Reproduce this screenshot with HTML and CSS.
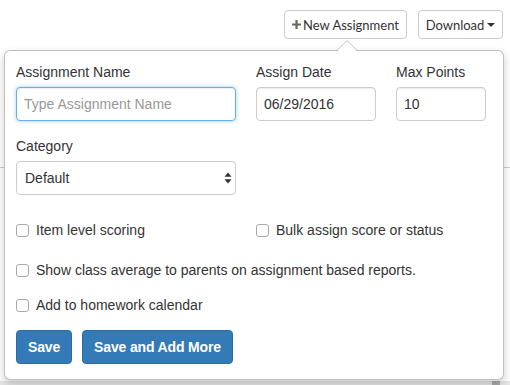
FILE: index.html
```html
<html>
  <head>
    <meta name="viewport" content="width=device-width, initial-scale=1" />
    <link rel="stylesheet" href="styles.css">
  </head>
  <body>
    <div class="page">
      <div class="toolbar">
        <button class="btn btn-default new-btn">
          <svg class="plus" width="9" height="9" viewBox="0 0 9 9"><path d="M3.4 0h2.2v3.4H9v2.2H5.6V9H3.4V5.6H0V3.4h3.4z" fill="#666"/></svg>New Assignment
        </button>
        <button class="btn btn-default">Download<span class="caret"></span></button>
      </div>

      <div class="sheet">
        <div class="sheet-row"></div>
        <div class="sheet-foot"><span class="sheet-scroll"></span></div>
      </div>

      <div class="popover">
        <div class="popover-arrow"></div>
        <form class="assign-form">
          <div class="form-row">
            <div class="form-group">
              <label>Assignment Name</label>
              <input class="form-control is-focused" type="text" placeholder="Type Assignment Name">
            </div>
            <div class="form-group">
              <label>Assign Date</label>
              <input class="form-control" type="text" value="06/29/2016">
            </div>
            <div class="form-group">
              <label>Max Points</label>
              <input class="form-control" type="text" value="10">
            </div>
          </div>

          <div class="form-row category-row">
            <div class="form-group">
              <label>Category</label>
              <div class="select-wrap">
                <select class="form-control">
                  <option>Default</option>
                </select>
                <svg class="select-arrows" width="8" height="12" viewBox="0 0 8 12">
                  <path d="M4 0.5 L7.5 4.8 L0.5 4.8 Z" fill="#333"/>
                  <path d="M4 11.5 L7.5 7.2 L0.5 7.2 Z" fill="#333"/>
                </svg>
              </div>
            </div>
          </div>

          <div class="form-row check-row first">
            <label class="checkbox"><input type="checkbox"> Item level scoring</label>
            <label class="checkbox span-2"><input type="checkbox"> Bulk assign score or status</label>
          </div>
          <div class="check-row second">
            <label class="checkbox"><input type="checkbox"> Show class average to parents on assignment based reports.</label>
          </div>
          <div class="check-row third">
            <label class="checkbox"><input type="checkbox"> Add to homework calendar</label>
          </div>

          <div class="actions">
            <button type="button" class="btn btn-primary">Save</button>
            <button type="button" class="btn btn-primary">Save and Add More</button>
          </div>
        </form>
      </div>
    </div>
  </body>
</html>
```

FILE: styles.css
```css
body {
  margin: 0;
  background: #fff;
  font-family: "Liberation Sans", Arial, sans-serif;
  font-size: 14px;
  color: #333;
}
.page {
  position: relative;
  width: 510px;
  height: 385px;
  overflow: hidden;
}
.toolbar {
  display: flex;
  justify-content: flex-end;
  gap: 11px;
  padding: 10px 7px 0 0;
}
.btn {
  font-family: inherit;
  font-size: 14px;
  line-height: 20px;
  border-radius: 4px;
  cursor: pointer;
}
.btn-default {
  font-family: Lato, "Liberation Sans", sans-serif;
  font-size: 13px;
  height: 29px;
  width: 85px;
  padding: 0;
  justify-content: center;
  background: #fff;
  border: 1px solid #ccc;
  color: #333;
  display: flex;
  align-items: center;
}
.new-btn {
  width: 123px;
}
.plus {
  margin-right: 2px;
}
.caret {
  display: inline-block;
  width: 0;
  height: 0;
  margin-left: 3px;
  border-top: 4px solid #333;
  border-left: 4px solid transparent;
  border-right: 4px solid transparent;
}

/* page content behind the popover */
.sheet {
  height: 346px;
  display: flex;
  flex-direction: column;
}
.sheet-row {
  height: 128px;
  border-bottom: 1px solid #ccc;
}
.sheet-foot {
  margin-top: auto;
  height: 4px;
  background: #e6e6e6;
  position: relative;
}
.sheet-scroll {
  position: absolute;
  right: 10px;
  top: 0;
  width: 8px;
  height: 4px;
  background: #aaa;
}

.popover {
  position: absolute;
  left: 4px;
  top: 50px;
  width: 500px;
  height: 330px;
  box-sizing: border-box;
  background: #fff;
  border: 1px solid rgba(0, 0, 0, 0.25);
  border-radius: 6px;
  box-shadow: 0 4px 10px rgba(0, 0, 0, 0.2);
  padding: 11px 16px 14px 11px;
}
.popover-arrow,
.popover-arrow::after {
  position: absolute;
  width: 0;
  height: 0;
  border-style: solid;
  border-color: transparent;
}
.popover-arrow {
  left: 331px;
  top: -11px;
  border-width: 0 11px 11px;
  border-bottom-color: rgba(0, 0, 0, 0.25);
}
.popover-arrow::after {
  content: "";
  left: -10px;
  top: 1px;
  border-width: 0 10px 10px;
  border-bottom-color: #fff;
}

.form-row {
  display: grid;
  grid-template-columns: 220px 120px 90px;
  column-gap: 20px;
}
.form-group label {
  display: block;
  line-height: 20px;
  margin-bottom: 5px;
}
.form-control {
  display: block;
  width: 100%;
  height: 34px;
  box-sizing: border-box;
  padding: 6px 7px;
  font-family: "Liberation Sans", Arial, sans-serif;
  font-size: 14px;
  color: #333;
  background: #fff;
  border: 1px solid #ccc;
  border-radius: 4px;
  box-shadow: inset 0 1px 1px rgba(0, 0, 0, 0.075);
  outline: none;
}
.form-control::placeholder {
  color: #999;
}
.is-focused {
  border-color: #66afe9;
  box-shadow: inset 0 1px 1px rgba(0, 0, 0, 0.075), 0 0 4px rgba(102, 175, 233, 0.6);
}
.category-row {
  margin-top: 15px;
}
.select-wrap {
  position: relative;
}
.select-wrap select {
  appearance: none;
  -webkit-appearance: none;
  padding-left: 8px;
  background: #fff;
  box-shadow: none;
}
.select-arrows {
  position: absolute;
  right: 4px;
  top: 11px;
}

.check-row {
  line-height: 20px;
}
.check-row.first { margin-top: 25px; }
.check-row.second { margin-top: 20px; }
.check-row.third { margin-top: 15px; }
.span-2 {
  grid-column: span 2;
}
.checkbox {
  display: flex;
  align-items: center;
}
.checkbox input {
  appearance: none;
  -webkit-appearance: none;
  width: 13px;
  height: 13px;
  margin: 0 7px 0 0;
  border: 1px solid #a8a8a8;
  border-radius: 3px;
  background: #fff;
}

.actions {
  display: flex;
  gap: 10px;
  margin-top: 15px;
}
.btn-primary {
  height: 34px;
  padding: 0 11px;
  letter-spacing: -0.15px;
  font-weight: bold;
  color: #fff;
  background: #337ab7;
  border: 1px solid #2e6da4;
}
```
